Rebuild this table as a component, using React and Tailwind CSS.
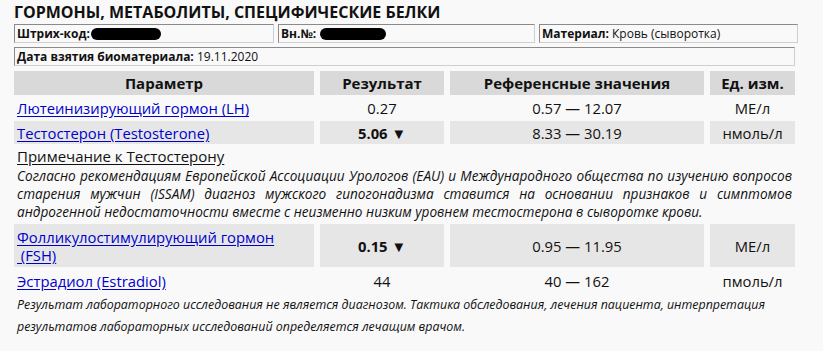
import React from "react";

const Blob = ({ w }) => (
  <span
    className="inline-block align-middle h-[12px] rounded-full bg-black ml-[1px]"
    style={{ width: w }}
  />
);

const Link = ({ children }) => (
  <a href="#" className="text-[#0000cc] underline underline-offset-[2px]">
    {children}
  </a>
);

export default function App() {
  const box =
    "h-[19px] border border-t-[#8a8a8a] border-l-[#8a8a8a] border-r-[#cfcfcf] border-b-[#cfcfcf] flex items-center px-[2px] text-[12px] leading-none whitespace-nowrap overflow-hidden";
  const head = "bg-[#d9d9d9] h-[24px] flex items-center justify-center font-bold text-[15px]";
  const shade = "bg-[#e6e6e6]";
  const rowCell = "flex items-center justify-center text-[14.8px]";
  const jline = "text-justify [text-align-last:justify] whitespace-nowrap";
  return (
    <div
      className="w-[823px] h-[351px] bg-[#f9f9f9] text-[#111] overflow-hidden"
      style={{ fontFamily: '"Open Sans", "Noto Sans", sans-serif' }}
    >
      <div className="w-[781px] ml-[14px] pt-[1px]">
        <div className="text-[16px] font-bold leading-[22px] h-[22px]">
          ГОРМОНЫ, МЕТАБОЛИТЫ, СПЕЦИФИЧЕСКИЕ БЕЛКИ
        </div>
        <div className="grid grid-cols-[260px_257px_259px] gap-x-[4px] mt-[1px]">
          <div className={box}>
            <b>Штрих-код:</b>
            <Blob w={70} />
          </div>
          <div className={box}>
            <b>Вн.№:</b>
            <span className="ml-[3px]" />
            <Blob w={66} />
          </div>
          <div className={box}>
            <b>Материал:</b>
            <span>&nbsp;Кровь (сыворотка)</span>
          </div>
        </div>
        <div className={box + " mt-[4px]"}>
          <b>Дата взятия биоматериала:</b>
          <span>&nbsp;19.11.2020</span>
        </div>

        <div className="grid grid-cols-[300px_124px_254px_85px] gap-x-[6px] mt-[5px]">
          <div className={head}>Параметр</div>
          <div className={head}>Результат</div>
          <div className={head}>Референсные значения</div>
          <div className={head}>Ед. изм.</div>
        </div>

        <div className="grid grid-cols-[300px_124px_254px_85px] gap-x-[6px] gap-y-[2px] mt-[2px]">
          <div className="h-[22px] flex items-center pl-[3px] text-[14.8px]">
            <Link>Лютеинизирующий гормон (LH)</Link>
          </div>
          <div className={rowCell}>0.27</div>
          <div className={rowCell}>0.57 — 12.07</div>
          <div className={rowCell}>МЕ/л</div>

          <div className={"h-[23px] flex items-center pl-[3px] text-[14.8px] " + shade}>
            <Link>Тестостерон (Testosterone)</Link>
          </div>
          <div className={rowCell + " font-bold " + shade}>5.06 ▼</div>
          <div className={rowCell + " " + shade}>8.33 — 30.19</div>
          <div className={rowCell + " " + shade}>нмоль/л</div>
        </div>

        <div className="mt-[1px] text-[15px] leading-[22px] pl-[3px]">
          <span className="underline underline-offset-[2px]">Примечание к Тестостерону</span>
        </div>
        <div className="text-[13.6px] italic leading-[18px] pl-[3px] pr-[3px]">
          <div className={jline}>
            Согласно рекомендациям Европейской Ассоциации Урологов (EAU) и Международного общества по изучению вопросов
          </div>
          <div className={jline}>
            старения мужчин (ISSAM) диагноз мужского гипогонадизма ставится на основании признаков и симптомов
          </div>
          <div className="whitespace-nowrap">
            андрогенной недостаточности вместе с неизменно низким уровнем тестостерона в сыворотке крови.
          </div>
        </div>

        <div className="grid grid-cols-[300px_124px_254px_85px] gap-x-[6px] gap-y-[2px] mt-[3px]">
          <div className={"h-[43px] flex flex-col justify-center pl-[3px] text-[14.8px] leading-[18px] " + shade}>
            <Link>
              Фолликулостимулирующий гормон
              <br />
              {"\u00a0(FSH)"}
            </Link>
          </div>
          <div className={rowCell + " font-bold " + shade}>0.15 ▼</div>
          <div className={rowCell + " " + shade}>0.95 — 11.95</div>
          <div className={rowCell + " " + shade}>МЕ/л</div>

          <div className="h-[23px] flex items-center pl-[3px] text-[14.8px]">
            <Link>Эстрадиол (Estradiol)</Link>
          </div>
          <div className={rowCell}>44</div>
          <div className={rowCell}>40 — 162</div>
          <div className={rowCell}>пмоль/л</div>
        </div>

        <div className="mt-[2px] text-[12.4px] italic leading-[22px] pl-[3px]">
          <div className="whitespace-nowrap">
            Результат лабораторного исследования не является диагнозом. Тактика обследования, лечения пациента, интерпретация
          </div>
          <div className="whitespace-nowrap">
            результатов лабораторных исследований определяется лечащим врачом.
          </div>
        </div>
      </div>
    </div>
  );
}
